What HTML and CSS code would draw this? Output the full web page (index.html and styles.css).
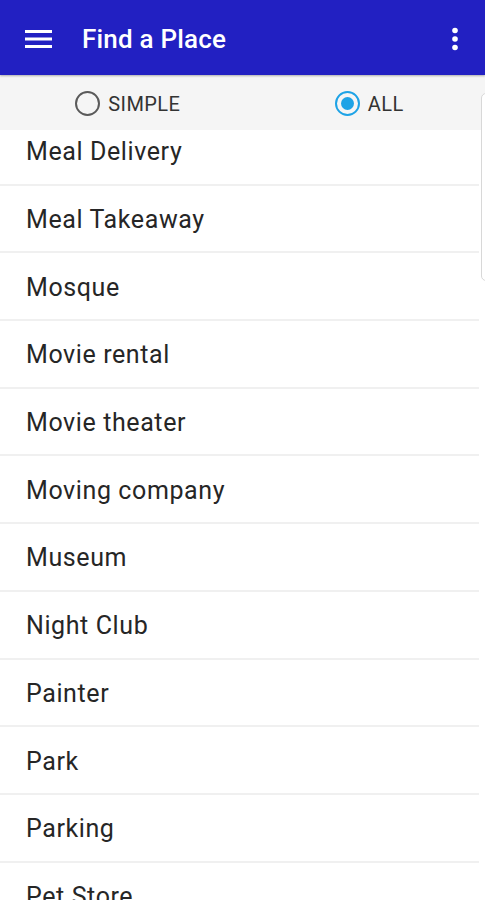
FILE: index.html
```html
<!DOCTYPE html>
<html lang="en">
<head>
    <meta charset="UTF-8">
    <meta name="viewport" content="width=device-width, initial-scale=1.0">
    <title>Find a Place</title>
    <link rel="stylesheet" href="styles.css">
</head>
<body>
    <!-- Top app bar -->
    <div class="app-bar">
        <svg class="icon-menu" width="28" height="20" viewBox="0 0 28 20">
            <rect x="0" y="1" width="27" height="3" fill="#fff"/>
            <rect x="0" y="8.5" width="27" height="3" fill="#fff"/>
            <rect x="0" y="16" width="27" height="3" fill="#fff"/>
        </svg>
        <div class="title">Find a Place</div>
        <svg class="icon-more" width="8" height="24" viewBox="0 0 8 24">
            <circle cx="4" cy="3.5" r="2.8" fill="#fff"/>
            <circle cx="4" cy="12" r="2.8" fill="#fff"/>
            <circle cx="4" cy="20.5" r="2.8" fill="#fff"/>
        </svg>
    </div>

    <!-- Filter radios -->
    <div class="filter-bar">
        <div class="filter">
            <span class="radio"></span>
            <span class="filter-label">SIMPLE</span>
        </div>
        <div class="filter">
            <span class="radio checked"></span>
            <span class="filter-label">ALL</span>
        </div>
    </div>

    <!-- Place list -->
    <div class="list-wrap">
        <ul class="place-list">
            <li>Meal Delivery</li>
            <li>Meal Takeaway</li>
            <li>Mosque</li>
            <li>Movie rental</li>
            <li>Movie theater</li>
            <li>Moving company</li>
            <li>Museum</li>
            <li>Night Club</li>
            <li>Painter</li>
            <li>Park</li>
            <li>Parking</li>
            <li>Pet Store</li>
        </ul>
    </div>

    <!-- fast scroll thumb, sits over the filter bar and list -->
    <div class="scroll-thumb"></div>
</body>
</html>
```

FILE: styles.css
```css
body {
    margin: 0;
    font-family: Roboto, "Noto Sans", sans-serif;
    background-color: #fff;
    color: #222;
    height: 900px;
    overflow: hidden;
    position: relative;
}

.app-bar {
    height: 75px;
    background-color: #2220c2;
    display: flex;
    align-items: center;
    padding: 2px 25px 0 25px;
    box-sizing: border-box;
    box-shadow: 0 1px 2px rgba(0, 0, 0, 0.3);
    position: relative;
    z-index: 2;
}

.icon-menu {
    display: block;
}

.title {
    color: #fff;
    font-size: 26px;
    font-weight: 500;
    letter-spacing: 0.2px;
    margin-left: 29px;
    flex: 1;
}

.icon-more {
    display: block;
    margin-right: 1px;
}

.filter-bar {
    height: 55px;
    background-color: #f5f5f5;
    display: flex;
    position: relative;
    z-index: 1;
}

.filter {
    flex: 1;
    display: flex;
    align-items: center;
    justify-content: center;
    gap: 8px;
    padding-top: 2px;
}

.filter:first-child {
    padding-left: 12px;
}

.filter:last-child {
    padding-left: 10px;
}

.radio {
    width: 21px;
    height: 21px;
    border: 2.5px solid #5a5a5a;
    border-radius: 50%;
    position: relative;
}

.radio.checked {
    border-color: #1ea3e6;
}

.radio.checked::after {
    content: "";
    position: absolute;
    left: 4px;
    top: 4px;
    width: 13px;
    height: 13px;
    border-radius: 50%;
    background-color: #1ea3e6;
}

.filter-label {
    font-size: 20px;
    color: #333;
    letter-spacing: 0.4px;
}

.list-wrap {
    height: 770px;
    overflow: hidden;
}

.place-list {
    list-style: none;
    margin: -12px 0 0 0;
    padding: 0;
}

.place-list li {
    height: 67.7px;
    box-sizing: border-box;
    padding: 2px 0 0 26px;
    font-size: 25px;
    letter-spacing: 0.6px;
    color: #262626;
    display: flex;
    align-items: center;
    border-bottom: 2px solid #f0f0f0;
    margin-right: 6px;
}

.scroll-thumb {
    position: absolute;
    right: -6px;
    top: 93px;
    width: 8px;
    height: 186px;
    border: 1px solid #d8d8d8;
    border-radius: 5px;
    background-color: #fff;
    z-index: 3;
}
```
